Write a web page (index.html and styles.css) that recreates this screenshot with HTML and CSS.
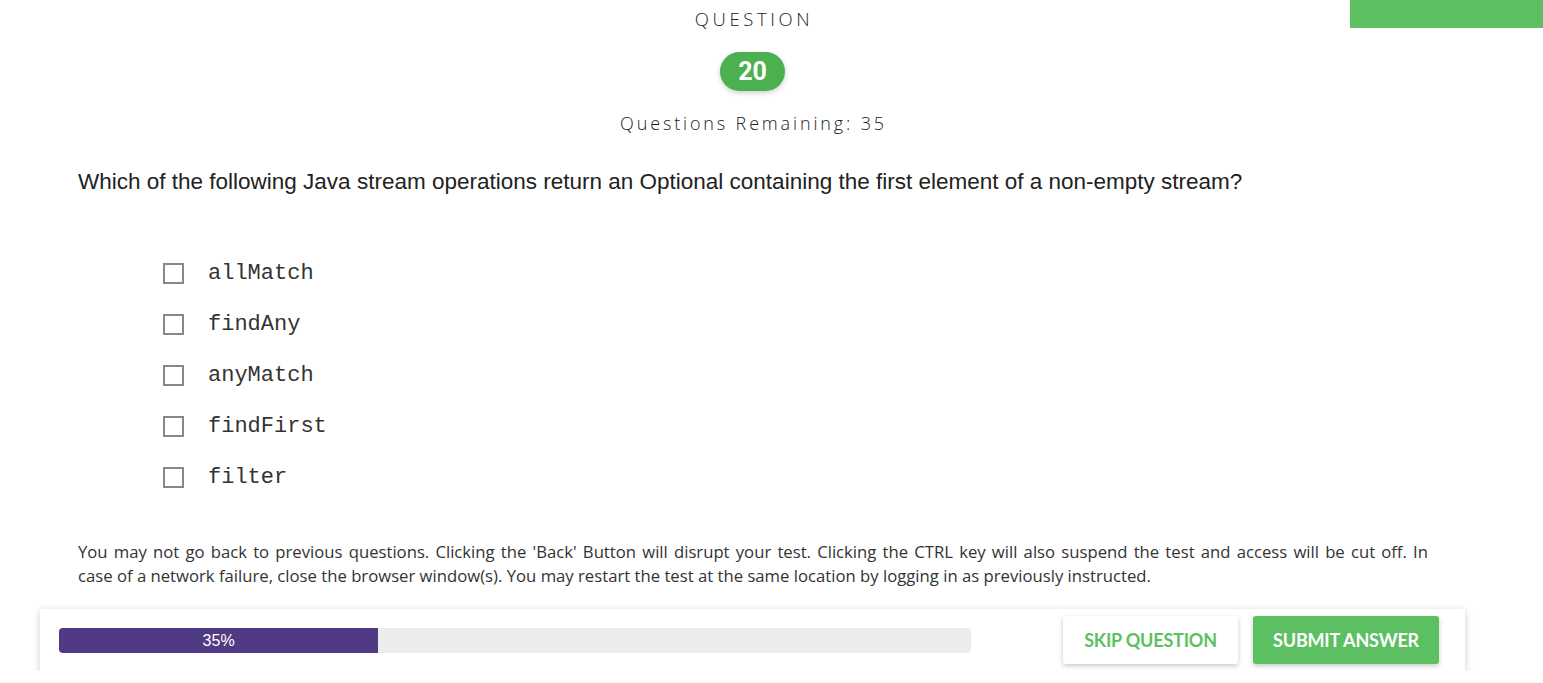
FILE: index.html
```html
<!DOCTYPE html>
<html>
<head>
<meta charset="utf-8">
<link rel="stylesheet" href="styles.css">
</head>
<body>
<div class="corner-bar"></div>
<div class="page">
  <header class="head">
    <div class="label">QUESTION</div>
    <div class="badge">20</div>
    <div class="remaining">Questions Remaining: 35</div>
  </header>
  <h1 class="question">Which of the following Java stream operations return an Optional containing the first element of a non-empty stream?</h1>
  <ul class="options">
    <li class="option"><span class="box"></span><span class="opt-text">allMatch</span></li>
    <li class="option"><span class="box"></span><span class="opt-text">findAny</span></li>
    <li class="option"><span class="box"></span><span class="opt-text">anyMatch</span></li>
    <li class="option"><span class="box"></span><span class="opt-text">findFirst</span></li>
    <li class="option"><span class="box"></span><span class="opt-text">filter</span></li>
  </ul>
  <p class="notice"><span class="notice-lead">You may not go back to previous questions. Clicking the 'Back' Button will disrupt your test. Clicking the CTRL key will also suspend the test and access will be cut off. In</span> case of a network failure, close the browser window(s). You may restart the test at the same location by logging in as previously instructed.</p>
  <div class="footer-card">
    <div class="progress">
      <div class="fill" style="width:35%">35%</div>
    </div>
    <div class="actions">
      <button class="btn skip">SKIP QUESTION</button>
      <button class="btn submit">SUBMIT ANSWER</button>
    </div>
  </div>
</div>
</body>
</html>
```
FILE: styles.css
```css
* { box-sizing: border-box; }
html, body { margin: 0; padding: 0; background: #fff; }
body { font-family: "Open Sans", "Lato", sans-serif; color: #333; }

.corner-bar {
  position: absolute;
  top: 0;
  right: 0;
  width: 193px;
  height: 28px;
  background: #5cbf62;
}

.page {
  width: 1425px;
  margin-left: 40px;
}

.head {
  display: flex;
  flex-direction: column;
  align-items: center;
  padding-top: 8px;
}
.label {
  font-size: 18.5px;
  font-weight: 300;
  letter-spacing: 3.6px;
  color: #222;
  line-height: 22px;
  margin-left: 3px;
}
.badge {
  margin-top: 22px;
  width: 65px;
  height: 39px;
  border-radius: 20px;
  background: #4caf50;
  color: #fff;
  font-family: "Roboto", "Liberation Sans", sans-serif;
  font-weight: 700;
  font-size: 25px;
  line-height: 39px;
  text-align: center;
  box-shadow: 0 2px 5px rgba(0,0,0,0.2);
}
.remaining {
  margin-top: 20px;
  font-size: 18px;
  font-weight: 300;
  letter-spacing: 2.85px;
  line-height: 24px;
  color: #222;
  margin-left: 2px;
}

.question {
  margin: 33px 0 0 38px;
  font-family: "Liberation Sans", Arial, sans-serif;
  font-weight: 400;
  font-size: 22.5px;
  line-height: 28px;
  color: #222;
}

.options {
  list-style: none;
  margin: 52px 0 0 123px;
  padding: 0;
}
.option {
  display: flex;
  align-items: center;
  height: 51px;
}
.box {
  width: 21px;
  height: 21px;
  border: 2px solid #888;
  background: #fff;
  flex: none;
}
.opt-text {
  margin-left: 24px;
  font-family: "Liberation Mono", "Courier New", monospace;
  font-size: 22px;
  color: #333;
}

.notice {
  margin: 37px 37px 0 38px;
  font-size: 16.7px;
  line-height: 24px;
  color: #333;
  text-align: justify;
}
.notice-lead {
  word-spacing: 1.5px;
}

.footer-card {
  margin-top: 21px;
  height: 62px;
  background: #fff;
  box-shadow: 0 2px 8px rgba(0,0,0,0.2);
  display: flex;
  align-items: center;
  padding: 0 27px 0 19px;
  gap: 92px;
}
.progress {
  width: 912px;
  height: 25px;
  background: #ececec;
  border-radius: 4px;
  overflow: hidden;
  flex: none;
}
.fill {
  height: 100%;
  background: #503a84;
  color: #fff;
  font-family: "Liberation Sans", Arial, sans-serif;
  font-size: 16px;
  line-height: 25px;
  text-align: center;
}
.actions {
  display: flex;
  gap: 15px;
}
.btn {
  height: 48px;
  border: none;
  border-radius: 3px;
  font-family: "Lato", sans-serif;
  font-weight: 700;
  font-size: 18px;
  letter-spacing: -0.2px;
  padding: 0;
  cursor: pointer;
}
.skip {
  width: 175px;
  background: #fff;
  color: #5cbf62;
  box-shadow: 0 2px 5px rgba(0,0,0,0.22);
}
.submit {
  width: 186px;
  background: #5cbf62;
  color: #fff;
  box-shadow: 0 2px 5px rgba(0,0,0,0.22);
}
```
